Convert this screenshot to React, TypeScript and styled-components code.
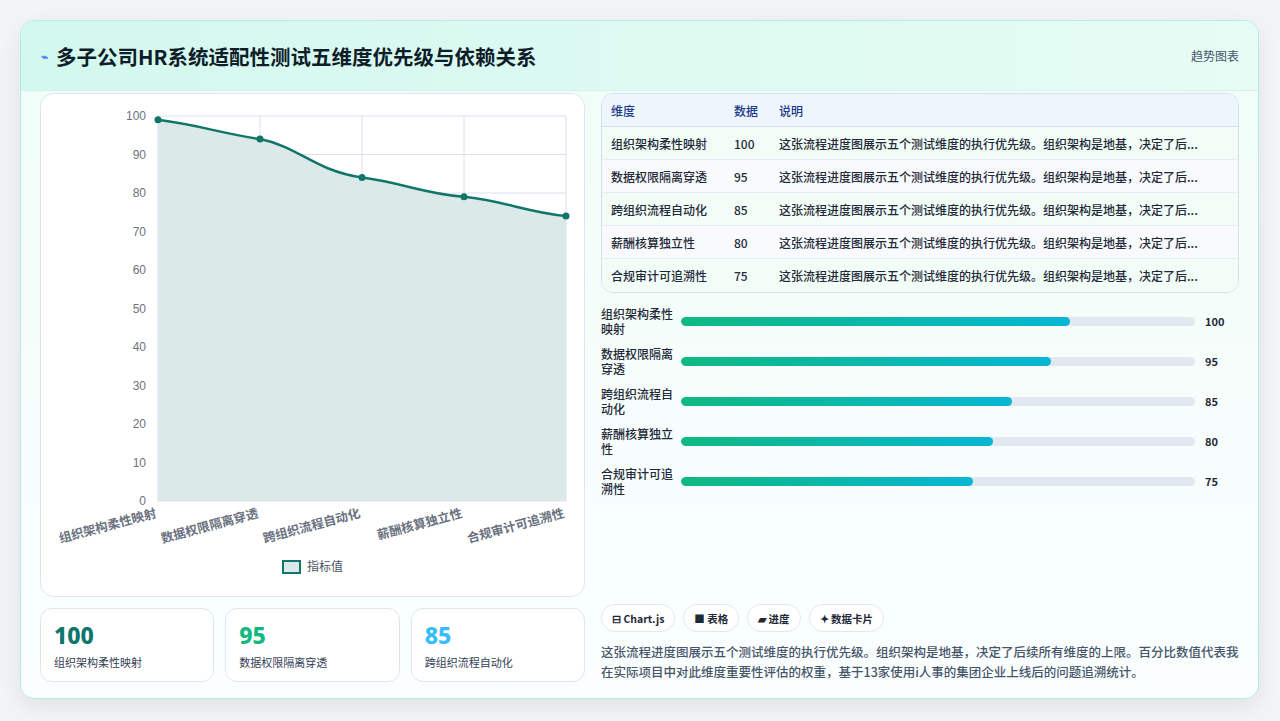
import React from "react";
import styled, { createGlobalStyle } from "styled-components";

const G = createGlobalStyle`
  html,body{margin:0;padding:0;background:#f3f4f6;}
  body{font-family:"Noto Sans CJK SC","Noto Sans",sans-serif;}
  *{box-sizing:border-box;}
`;
const Page = styled.div`width:1280px;height:721px;padding:20px 21px 22px 20px;`;
const Card = styled.div`
  height:679px;border:1px solid #b7ece3;border-radius:14px;overflow:hidden;
  background:linear-gradient(180deg,#effdf8,#f7fdfc 60%,#fafeff);
  box-shadow:0 8px 24px rgba(0,0,0,.08);display:flex;flex-direction:column;
`;
const Header = styled.div`
  height:70px;flex:none;display:flex;align-items:center;justify-content:space-between;
  padding:0 19px 0 20px;background:linear-gradient(90deg,#d3f8ee,#e6fcf4);
  border-bottom:1px solid #d5f1ea;
`;
const Title = styled.h1`margin:0;font-size:20.5px;font-weight:700;color:#0f1d2b;display:flex;align-items:center;gap:8px;`;
const Link = styled.span`font-size:12px;color:#475569;`;
const Body = styled.div`flex:1;display:flex;gap:16px;padding:2px 19px 18px 19px;`;
const Left = styled.div`width:545px;display:flex;flex-direction:column;gap:11px;`;
const ChartBox = styled.div`height:504px;background:#fff;border:1px solid #dfe7ee;border-radius:14px;`;
const Stats = styled.div`display:flex;gap:11px;`;
const Stat = styled.div`flex:1;height:74px;background:#fff;border:1px solid #dfe7ee;border-radius:12px;padding:12px 13px;`;
const StatNum = styled.div<{c:string}>`font-size:23px;font-weight:800;color:${p=>p.c};line-height:28px;font-family:"Noto Sans","Noto Sans CJK SC",sans-serif;`;
const StatLab = styled.div`font-size:11px;color:#334155;margin-top:5px;`;
const Right = styled.div`flex:1;display:flex;flex-direction:column;`;
const Table = styled.div`border:1px solid #d6e0ea;border-radius:12px;overflow:hidden;background:#fff;`;
const Row = styled.div<{h?:boolean;alt?:boolean}>`
  display:grid;grid-template-columns:123px 45px 1fr;height:33px;align-items:center;padding-left:9px;
  font-size:12px;font-weight:500;color:${p=>p.h?"#1e3a8a":"#1f2937"};
  background:${p=>p.h?"#eef6fd":p.alt?"#f8fafd":"#f2fdf8"};
  border-bottom:${p=>p.h?"1px solid #d6e0ea":"1px solid #e6edf2"};
  &:last-child{border-bottom:none;}
  span{white-space:nowrap;overflow:hidden;}
`;
const Bars = styled.div`display:flex;flex-direction:column;gap:8px;margin-top:12px;`;
const BarRow = styled.div`display:flex;align-items:center;height:32px;`;
const BarLab = styled.div`width:80px;font-size:12px;line-height:15px;color:#1f2937;padding-right:8px;font-weight:500;`;
const Track = styled.div`flex:1;height:9px;border-radius:5px;background:#e2e8f0;overflow:hidden;`;
const Fill = styled.div`height:100%;border-radius:5px;background:linear-gradient(90deg,#10b981,#06b6d4);`;
const BarVal = styled.div`width:44px;padding-left:10px;font-size:11px;font-weight:700;color:#1f2937;`;
const Tags = styled.div`margin-top:auto;display:flex;gap:8px;`;
const Tag = styled.span`height:28px;padding:0 10px;border:1px solid #e2e8f0;border-radius:14px;background:#fff;font-size:10.5px;font-weight:600;color:#1f2937;display:flex;align-items:center;gap:4px;`;
const Para = styled.p`margin:10px 0 0;font-size:12.5px;line-height:20px;color:#475569;font-weight:500;`;

const data:[string,number][]= [["组织架构柔性映射",100],["数据权限隔离穿透",95],["跨组织流程自动化",85],["薪酬核算独立性",80],["合规审计可追溯性",75]];
const desc="这张流程进度图展示五个测试维度的执行优先级。组织架构是地基，决定了后...";

function Chart(){
  const x0=117,x1=525,yTop=22,yBot=407;
  const vals=[99,94,84,79,74];
  const X=(i:number)=>x0+(x1-x0)*i/4;
  const Y=(v:number)=>yBot-(yBot-yTop)*v/100;
  const pts=vals.map((v,i)=>[X(i),Y(v)]);
  const line=`M${pts[0][0]},${pts[0][1]} C${pts[0][0]+40},${pts[0][1]+5} ${pts[1][0]-40},${pts[1][1]-6} ${pts[1][0]},${pts[1][1]} C${pts[1][0]+40},${pts[1][1]+8} ${pts[2][0]-50},${pts[2][1]-8} ${pts[2][0]},${pts[2][1]} C${pts[2][0]+40},${pts[2][1]+5} ${pts[3][0]-40},${pts[3][1]-3} ${pts[3][0]},${pts[3][1]} C${pts[3][0]+40},${pts[3][1]+4} ${pts[4][0]-40},${pts[4][1]-4} ${pts[4][0]},${pts[4][1]}`;
  return <svg width="543" height="502" style={{display:"block"}}>
    {Array.from({length:11},(_,k)=>{const y=Y(k*10);return <g key={k}><line x1={x0} x2={x1} y1={y} y2={y} stroke="#d9e2ea"/><text x={x0-12} y={y+4} textAnchor="end" fontSize="12" fill="#6b7280" fontFamily="Liberation Sans">{k*10}</text></g>})}
    {[0,1,2,3,4].map(i=><line key={i} x1={X(i)} x2={X(i)} y1={yTop} y2={yBot} stroke="#d9e2ea"/>)}
    <path d={line+` L${x1},${yBot} L${x0},${yBot} Z`} fill="#dbeae8"/>
    <path d={line} fill="none" stroke="#11766a" strokeWidth="2.5"/>
    {pts.map((p,i)=><circle key={i} cx={p[0]} cy={p[1]} r="3.5" fill="#11766a"/>)}
    {data.map(([l],i)=><text key={i} transform={`translate(${X(i)-1},${yBot+16}) rotate(-15)`} textAnchor="end" fontSize="12.5" fontWeight="600" fill="#6b7280">{l}</text>)}
    <rect x="242" y="467" width="17" height="12" fill="#dbeae8" stroke="#11766a" strokeWidth="2"/>
    <text x="266" y="477" fontSize="12" fill="#4b5563">指标值</text>
  </svg>;
}

export default function App(){
  return <Page><G/><Card>
    <Header><Title><span style={{color:"#3b82f6",fontSize:12}}>⌁</span>多子公司HR系统适配性测试五维度优先级与依赖关系</Title><Link>趋势图表</Link></Header>
    <Body>
      <Left>
        <ChartBox><Chart/></ChartBox>
        <Stats>
          <Stat><StatNum c="#0f766e">100</StatNum><StatLab>组织架构柔性映射</StatLab></Stat>
          <Stat><StatNum c="#10b981">95</StatNum><StatLab>数据权限隔离穿透</StatLab></Stat>
          <Stat><StatNum c="#38bdf8">85</StatNum><StatLab>跨组织流程自动化</StatLab></Stat>
        </Stats>
      </Left>
      <Right>
        <Table>
          <Row h><span>维度</span><span>数据</span><span>说明</span></Row>
          {data.map(([l,v],i)=><Row key={l} alt={i%2===1}><span>{l}</span><span>{v}</span><span>{desc}</span></Row>)}
        </Table>
        <Bars>
          {data.map(([l,v])=><BarRow key={l}><BarLab>{l}</BarLab><Track><Fill style={{width:`${v/132*100}%`}}/></Track><BarVal>{v}</BarVal></BarRow>)}
        </Bars>
        <Tags><Tag>⊟ Chart.js</Tag><Tag>■ 表格</Tag><Tag>▰ 进度</Tag><Tag>✦ 数据卡片</Tag></Tags>
        <Para>这张流程进度图展示五个测试维度的执行优先级。组织架构是地基，决定了后续所有维度的上限。百分比数值代表我在实际项目中对此维度重要性评估的权重，基于13家使用i人事的集团企业上线后的问题追溯统计。</Para>
      </Right>
    </Body>
  </Card></Page>;
}
